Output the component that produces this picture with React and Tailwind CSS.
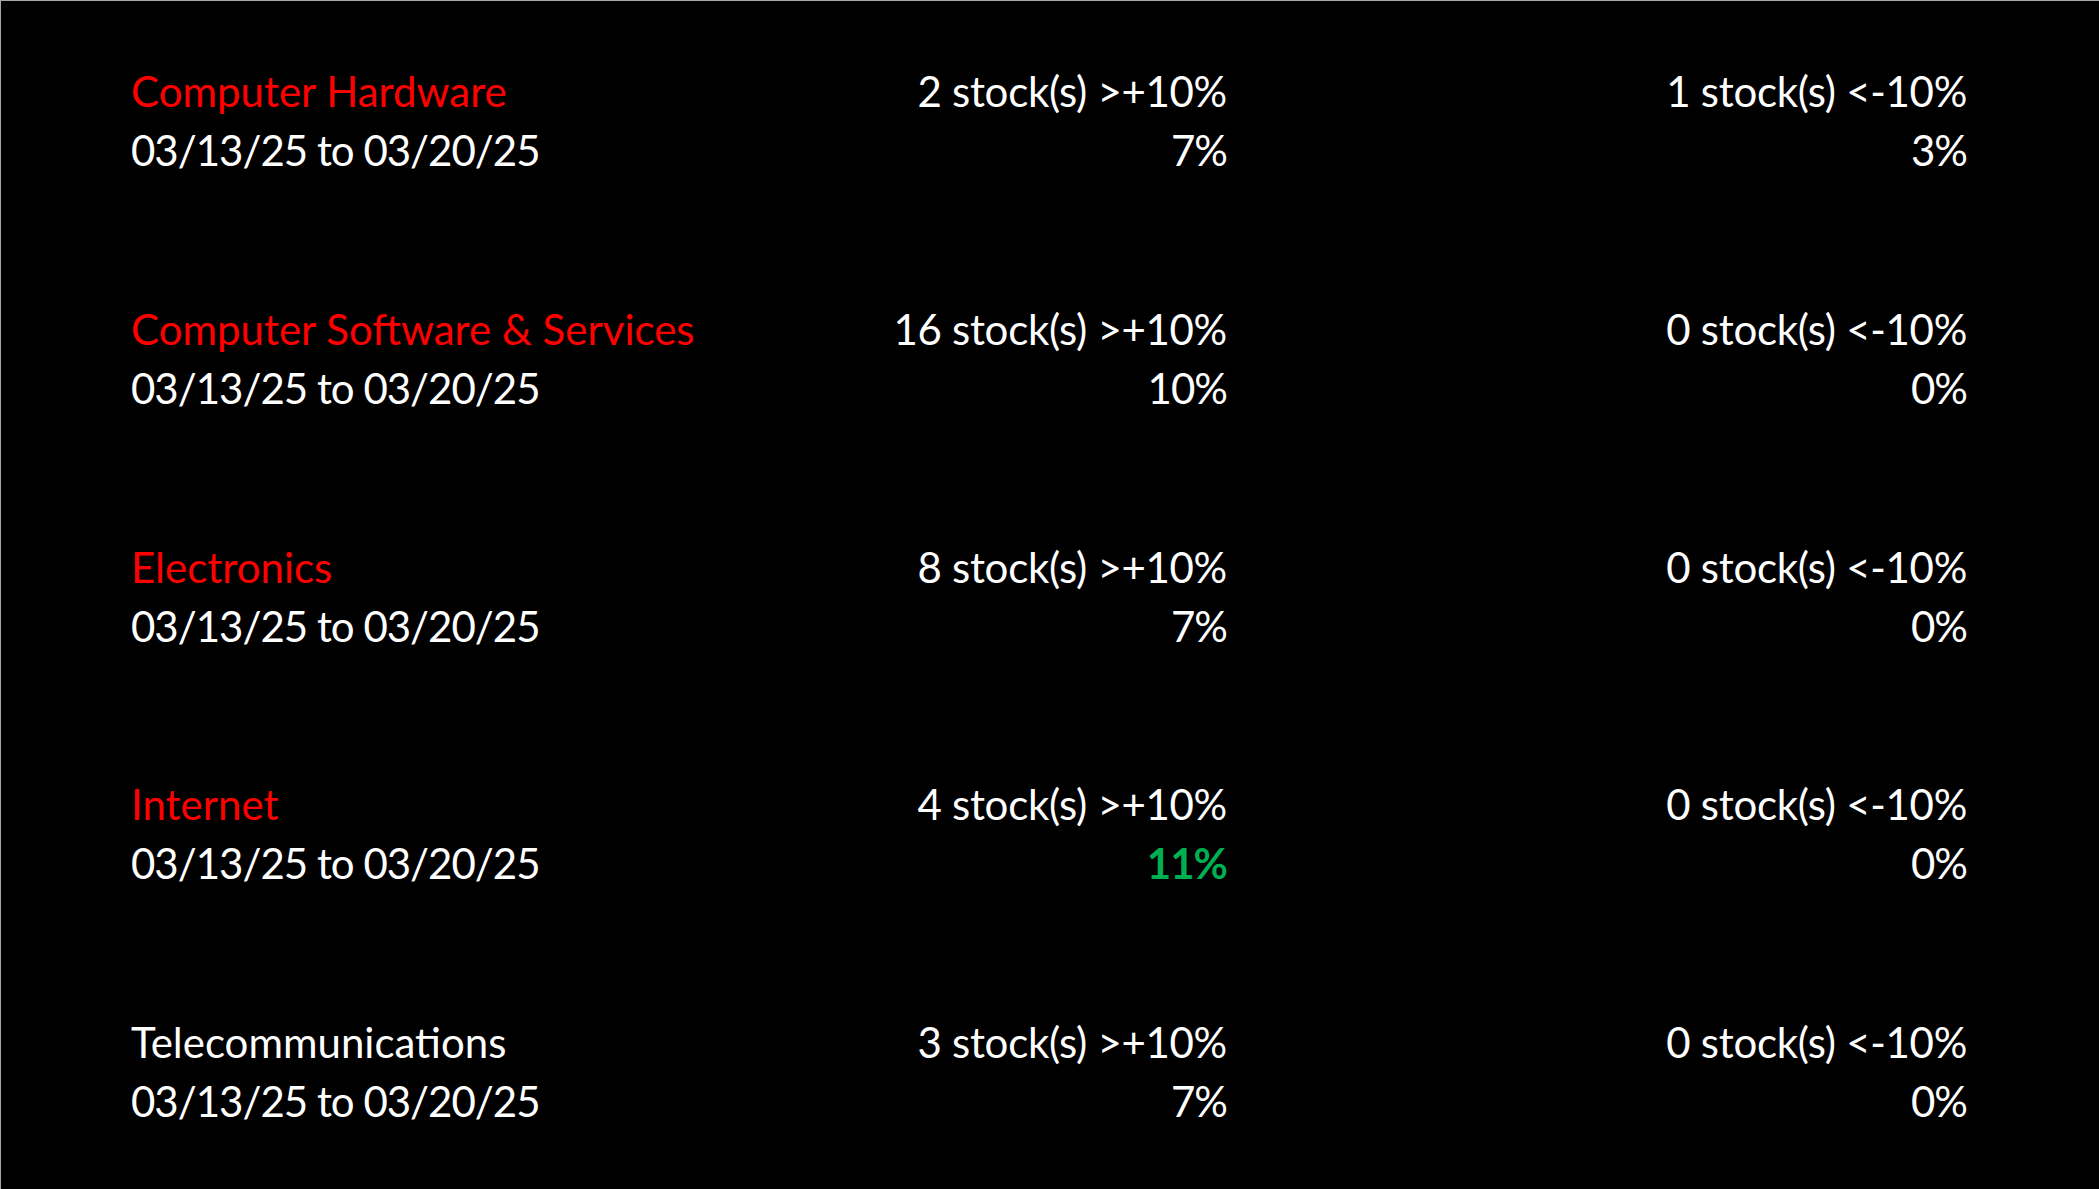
import React from "react";

const rows = [
  { name: "Computer Hardware", red: true, up: 2, upPct: "7%", down: 1, downPct: "3%" },
  { name: "Computer Software & Services", red: true, up: 16, upPct: "10%", down: 0, downPct: "0%" },
  { name: "Electronics", red: true, up: 8, upPct: "7%", down: 0, downPct: "0%" },
  { name: "Internet", red: true, up: 4, upPct: "11%", upHit: true, down: 0, downPct: "0%" },
  { name: "Telecommunications", red: false, up: 3, upPct: "7%", down: 0, downPct: "0%" },
];

export default function App() {
  return (
    <div
      className="h-screen w-full overflow-hidden bg-black text-white border-t border-l border-[#a6a6a6] pl-[130px] pt-[61px]"
      style={{ fontFamily: "Lato, 'Open Sans', sans-serif" }}
    >
      <div className="flex flex-col gap-[119.8px]">
        {rows.map((r) => (
          <div key={r.name} className="flex text-[42px] leading-[59px]">
            <div className="w-[700px] shrink-0">
              <div className={r.red ? "text-[#ff0000]" : "text-white"}>{r.name}</div>
              <div className="tracking-[-1px]">03/13/25 to 03/20/25</div>
            </div>
            <div className="w-[396px] shrink-0 text-right">
              <div className="tracking-[-0.3px]">{r.up} stock(s) &gt;+10%</div>
              <div className={r.upHit ? "text-[#00b050] font-bold tracking-[-1px]" : "tracking-[-1px]"}>{r.upPct}</div>
            </div>
            <div className="w-[740px] shrink-0 text-right">
              <div className="tracking-[-0.3px]">{r.down} stock(s) &lt;-10%</div>
              <div className="tracking-[-1px]">{r.downPct}</div>
            </div>
          </div>
        ))}
      </div>
    </div>
  );
}
